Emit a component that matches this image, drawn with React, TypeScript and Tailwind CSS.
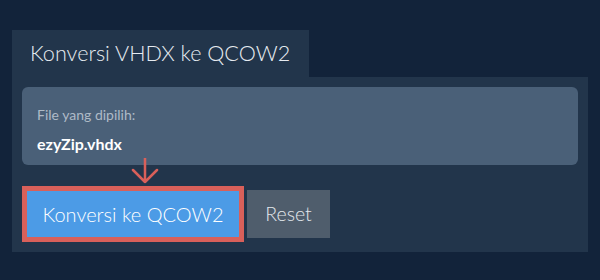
import React from "react";

const ArrowDown = () => (
  <svg className="absolute left-[119px] top-[81px]" width="28" height="26" viewBox="0 0 28 26" fill="none">
    <path d="M14 0 V24 M2 12 L14 24 L26 12" stroke="#d9605a" strokeWidth="2.5" strokeLinecap="round" strokeLinejoin="round" />
  </svg>
);

export default function App() {
  return (
    <div className="h-[280px] w-[600px] bg-[#12233a] px-[12px] pt-[30px]" style={{ fontFamily: "Lato, 'Noto Sans', sans-serif" }}>
      <div className="flex h-[47px] w-[297px] items-center bg-[#22354b] pl-[18px] text-[21.6px] font-light text-[#e6ebf0]">
        Konversi VHDX ke QCOW2
      </div>
      <div className="relative h-[175px] w-[576px] bg-[#22354b] p-[10px]">
        <div className="flex h-[78px] flex-col rounded-md bg-[#4a6078] px-[15px] pt-[19px]">
          <span className="text-[14px] leading-[18px] text-[#aebac7]">File yang dipilih:</span>
          <span className="mt-[10px] text-[16px] font-bold leading-[20px] text-white">ezyZip.vhdx</span>
        </div>
        <ArrowDown />
        <div className="mt-[21px] flex items-center gap-[3px]">
          <button type="button" className="h-[56px] w-[222px] border-[5px] border-[#d9605a] bg-[#4c9be6] text-[20px] font-light text-white">
            Konversi ke QCOW2
          </button>
          <button type="button" className="h-[48px] w-[83px] bg-[#4f5d6c] text-[19.5px] font-light text-[#e4e8ec]">
            Reset
          </button>
        </div>
      </div>
    </div>
  );
}
